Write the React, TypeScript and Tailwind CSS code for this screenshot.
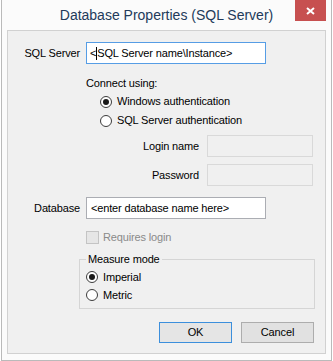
import React from "react"

const font = { fontFamily: '"Liberation Sans", Arial, sans-serif' }

function Radio({ checked, label }: { checked?: boolean; label: string }) {
  return (
    <div className="flex items-center h-full">
      <span className="w-[12px] h-[12px] rounded-full border border-[#3c3c3c] bg-white flex items-center justify-center shrink-0">
        {checked && <span className="w-[6px] h-[6px] rounded-full bg-[#1a1a1a]" />}
      </span>
      <span className="ml-[5px]">{label}</span>
    </div>
  )
}

function Field({ label, children, labelW = "w-[72px]", gap = "ml-[6px]" }: { label: string; children: React.ReactNode; labelW?: string; gap?: string }) {
  return (
    <div className="flex items-center">
      <span className={`${labelW} text-right shrink-0`}>{label}</span>
      <div className={gap}>{children}</div>
    </div>
  )
}

function Button({ label, primary }: { label: string; primary?: boolean }) {
  return (
    <button
      className={
        "w-[73px] h-[21px] flex items-center justify-center border " +
        (primary ? "border-[#3c8fdc] bg-[#e5e5e5]" : "border-[#adadad] bg-[#e1e1e1]")
      }
    >
      {label}
    </button>
  )
}

export default function App() {
  return (
    <div className="w-[333px] h-[361px] bg-white overflow-hidden text-[11px] text-black tracking-[-0.15px]" style={font}>
      <div className="ml-[1px] w-[331px] h-[361px] bg-[#fbfbfb] border-l border-r border-b border-[#bababa] flex flex-col">
        {/* Title bar */}
        <div className="h-[30px] flex items-start relative">
          <div className="flex-1 text-center text-[14px] leading-[16px] pt-[7px] text-[#223a5a] tracking-normal">
            Database Properties (SQL Server)
          </div>
          <div className="absolute right-[5px] top-0 w-[31px] h-[21px] bg-[#c75050] flex items-center justify-center">
            <svg width="9" height="8" viewBox="0 0 9 8">
              <path d="M1 1 L8 7 M8 1 L1 7" stroke="white" strokeWidth="2" />
            </svg>
          </div>
        </div>

        {/* Client panel */}
        <div className="mx-[5px] h-[324px] bg-[#f0f0f0] border border-[#d1d1d1] flex flex-col">
          <div className="mt-[11px]">
            <Field label="SQL Server">
              <div className="w-[180px] h-[22px] bg-white border border-[#569de5] flex items-center pl-[3px] whitespace-nowrap">
                <span>&lt;</span>
                <span className="w-px h-[13px] bg-black" />
                <span>SQL Server name\Instance&gt;</span>
              </div>
            </Field>
          </div>

          <div className="ml-[78px] mt-[12px] h-[14px] leading-[14px]">Connect using:</div>
          <div className="ml-[92px] mt-[2px] h-[19px]">
            <Radio checked label="Windows authentication" />
          </div>
          <div className="ml-[92px] h-[19px]">
            <Radio label="SQL Server authentication" />
          </div>

          <div className="mt-[5px]">
            <Field label="Login name" labelW="w-[191px]" gap="ml-[8px]">
              <div className="w-[106px] h-[22px] bg-[#f0f0f0] border border-[#d9d9d9]" />
            </Field>
          </div>
          <div className="mt-[7px]">
            <Field label="Password" labelW="w-[191px]" gap="ml-[8px]">
              <div className="w-[106px] h-[22px] bg-[#f0f0f0] border border-[#d9d9d9]" />
            </Field>
          </div>

          <div className="mt-[11px]">
            <Field label="Database">
              <div className="w-[180px] h-[22px] bg-white border border-[#abadb3] flex items-center pl-[4px] whitespace-nowrap">
                &lt;enter database name here&gt;
              </div>
            </Field>
          </div>

          <div className="ml-[78px] mt-[10px] h-[17px] flex items-center text-[#8a8a8a]">
            <span className="w-[13px] h-[13px] border border-[#c4c4c4] bg-[#e6e6e6] shrink-0" />
            <span className="ml-[4px]">Requires login</span>
          </div>

          <fieldset className="ml-[71px] mt-[6px] w-[236px] h-[57px] border border-[#d5d5d5] flex flex-col">
            <legend className="ml-[6px] px-[2px] leading-[14px]">Measure mode</legend>
            <div className="ml-[6px] mt-[2px] h-[18px]">
              <Radio checked label="Imperial" />
            </div>
            <div className="ml-[6px] h-[18px]">
              <Radio label="Metric" />
            </div>
          </fieldset>

          <div className="mt-[13px] mr-[11px] flex justify-end gap-[9px]">
            <Button primary label="OK" />
            <Button label="Cancel" />
          </div>
        </div>
      </div>
    </div>
  )
}
